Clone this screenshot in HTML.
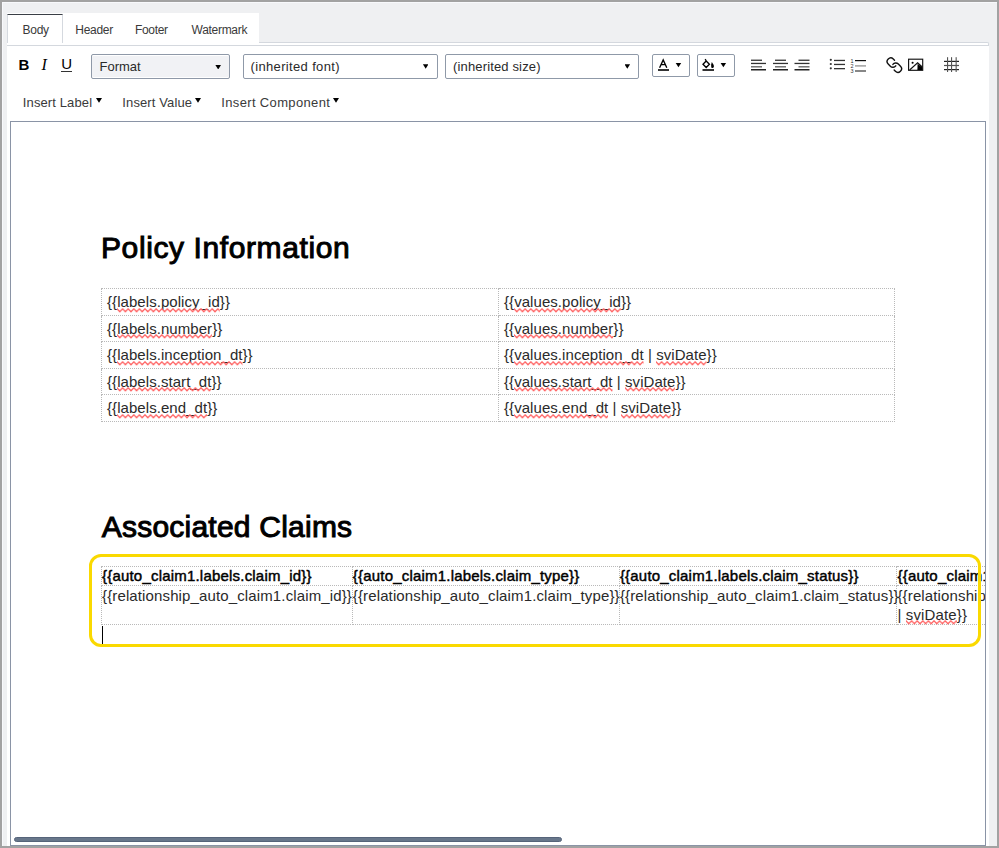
<!DOCTYPE html>
<html><head><meta charset="utf-8">
<style>
*{box-sizing:border-box;margin:0;padding:0}
html,body{width:999px;height:848px;overflow:hidden;background:#a2a2a2}
body{font-family:"Liberation Sans",sans-serif;color:#222;position:relative}
.abs{position:absolute}
#frame{left:2px;top:2px;width:995px;height:844px;background:#eff0f2;border-left:1px solid #f8f9fc;border-top:1px solid #f8f9fc}
#panel{left:7px;top:45px;width:982px;height:801px;background:#fff}
#tabs{left:7px;top:13px;width:252px;height:32px;background:#fff}
.tabline{background:#d4d8de;height:1px}
.tab{top:13px;height:32px;font-size:12px;letter-spacing:-0.3px;line-height:14px;color:#3a3a3a;white-space:nowrap}
.sel{top:54px;height:25px;border:1.5px solid #8f99a8;border-radius:2px;background:#fff;box-shadow:inset 0 1px #fff,inset 0 -1px #fff;font-size:13px;line-height:20px;color:#2a2a2a;white-space:nowrap}
.arrow{width:5.6px;height:4.5px;background:#000;clip-path:polygon(0 0,100% 0,50% 100%)}
.marrow{position:absolute;top:97.9px;width:6px;height:4.9px;background:#000;clip-path:polygon(0 0,100% 0,50% 100%)}
.menu{top:95px;font-size:13px;line-height:16px;color:#3a3a3a;white-space:nowrap;letter-spacing:0.12px}
#editor{left:10px;top:121px;width:976px;height:725px;border:1px solid #8a94a6;background:#fff;overflow:hidden}
.h{font-weight:normal;font-size:30px;line-height:36px;color:#000;-webkit-text-stroke:1px #000;letter-spacing:0;white-space:nowrap}
table{border-collapse:collapse}
td{border:1px dotted #b9b9b9;vertical-align:top;white-space:nowrap}
.sp{position:relative}
.sp svg{position:absolute;left:0;top:calc(100% - 2.3px);width:100%;height:5px}
#t1{left:90px;top:166px;width:794px;font-size:15px;letter-spacing:0.06px;color:#2a2a2a}
#t1 td{height:26.6px;padding:4px 0 0 5px;line-height:18px}
#t2{left:90px;top:443.5px;font-size:15px;letter-spacing:0.13px;color:#2a2a2a;table-layout:fixed;width:1095.5px}
#t2 td{padding:1.1px 0 0 0;line-height:18.6px}
#t2 tr.hd td{line-height:18.5px;padding:0}
#t2 tr.hd td{font-weight:normal;color:#000;-webkit-text-stroke:0.45px #000;letter-spacing:0.2px}
</style></head><body>
<svg width="0" height="0" style="position:absolute"><defs><pattern id="zz" patternUnits="userSpaceOnUse" width="5.6" height="5"><path d="M-2.8 3.8 L0 0.8 L2.8 3.8 L5.6 0.8 L8.4 3.8" stroke="#ff6464" stroke-width="1.25" fill="none"/></pattern></defs></svg>
<div id="frame" class="abs"></div>
<div id="tabs" class="abs"></div>
<div class="abs" style="left:259px;top:42px;width:730px;height:4px;background:#fff;border-top:1px solid #d4d8de;border-right:1px solid #d4d8de;border-top-right-radius:2px"></div>
<div id="panel" class="abs"></div>
<div class="abs tabline" style="left:7px;top:45px;width:982px"></div>
<!-- body tab -->
<div class="abs" style="left:7px;top:14px;width:56px;height:29px;border-left:1px solid #d5d9df;border-right:1px solid #d5d9df;border-top:1.5px solid #3a3f46;background:#fff"></div>
<div class="abs tab" style="left:22.6px;top:23px">Body</div>
<div class="abs tab" style="left:75.3px;top:23px">Header</div>
<div class="abs tab" style="left:134.9px;top:23px">Footer</div>
<div class="abs tab" style="left:191.6px;top:23px">Watermark</div>

<!-- toolbar row 1 -->
<div class="abs" style="left:18.5px;top:54.5px;font:bold 15px 'Liberation Sans',sans-serif;color:#000;line-height:20px">B</div>
<div class="abs" style="left:41.5px;top:54.5px;font:italic 16px 'Liberation Serif',serif;color:#000;line-height:20px">I</div>
<div class="abs" style="left:61.3px;top:54.4px;font:15px 'Liberation Sans',sans-serif;color:#000;line-height:20px">U</div>
<div class="abs" style="left:61px;top:71.2px;width:10.8px;height:1.1px;background:#333"></div>

<div class="abs sel" style="left:90.5px;width:139.5px;background:#f1f2f5"><span class="abs" style="left:8px;top:1.5px">Format</span><div class="abs arrow" style="left:123.9px;top:9.9px"></div></div>
<div class="abs sel" style="left:243px;width:194.5px"><span class="abs" style="left:6.5px;top:1.5px;letter-spacing:0.35px">(inherited font)</span><div class="abs arrow" style="left:178.9px;top:9.3px"></div></div>
<div class="abs sel" style="left:445px;width:194px"><span class="abs" style="left:7px;top:1.5px;letter-spacing:0.15px">(inherited size)</span><div class="abs arrow" style="left:178.5px;top:9.3px"></div></div>

<div class="abs sel" style="left:652px;width:38px;height:23px"></div>
<div class="abs sel" style="left:697px;width:38px;height:23px"></div>
<svg class="abs" style="left:0;top:0" width="999" height="90" viewBox="0 0 999 90">
  <!-- A color -->
  <path d="M659.6 67.8 L663.2 59.9 L666.8 67.8 M661.2 64.6 H665.2" stroke="#000" stroke-width="1.35" fill="none"/>
  <rect x="658" y="69" width="11" height="2" fill="#333"/>
  <path d="M675.7 63 H681.2 L678.45 67.2 Z" fill="#000"/>
  <!-- bucket -->
  <path d="M706.2 61 L709.4 64.2 L706.2 67.5 L703 64.2 Z M706.2 61 L705.2 59.2" stroke="#000" stroke-width="1.35" fill="none"/>
  <path d="M711.8 62 Q714.2 65 713.9 67 Q712.8 68.8 711.3 67.4 Q710.6 65.5 711.8 62 Z" fill="#000"/>
  <rect x="702.5" y="69" width="11.5" height="2" fill="#333"/>
  <path d="M720.6 63 H726.1 L723.35 67.2 Z" fill="#000"/>
  <!-- align left -->
  <g fill="#333">
   <rect x="751" y="59.6" width="11" height="1.3"/><rect x="751" y="62.8" width="15" height="1.3"/><rect x="751" y="66.1" width="11" height="1.4" fill="#666"/><rect x="751" y="69" width="15" height="1.5" fill="#222"/>
   <rect x="775" y="59.6" width="11" height="1.3"/><rect x="773" y="62.8" width="15" height="1.3"/><rect x="775" y="66.1" width="11" height="1.4" fill="#666"/><rect x="773" y="69" width="15" height="1.5" fill="#222"/>
   <rect x="798.5" y="59.6" width="11" height="1.3"/><rect x="794.5" y="62.8" width="15" height="1.3"/><rect x="798.5" y="66.1" width="11" height="1.4" fill="#666"/><rect x="794.5" y="69" width="15" height="1.5" fill="#222"/>
  </g>
  <!-- bullets -->
  <g fill="#333">
   <circle cx="830.8" cy="59.8" r="1.1"/><circle cx="830.8" cy="64" r="1.1"/><circle cx="830.8" cy="68.3" r="1.1"/>
   <rect x="834" y="59.8" width="11" height="1.3"/><rect x="834" y="63.8" width="11" height="1.3"/><rect x="834" y="68" width="11" height="1.3"/>
   <rect x="855" y="60" width="11" height="1.2" fill="#111"/><rect x="855" y="65.2" width="11" height="1.4" fill="#999"/><rect x="855" y="70.3" width="11" height="1.4" fill="#555"/>
  </g>
  <text x="850.5" y="62.5" font-family="Liberation Sans" font-size="5.5" fill="#333">1</text>
  <text x="850.5" y="67.5" font-family="Liberation Sans" font-size="5.5" fill="#333">2</text>
  <text x="850.5" y="72.5" font-family="Liberation Sans" font-size="5.5" fill="#333">3</text>
  <!-- link -->
  <g transform="translate(885.7,56.5) scale(0.72)" stroke="#111" stroke-width="1.95" fill="none" stroke-linecap="round" stroke-linejoin="round">
   <path d="M14 13 a5 5 0 0 1 -7.54 .54 l-3 -3 a5 5 0 0 1 7.07 -7.07 l1.72 1.71"/>
   <path d="M10 11 a5 5 0 0 1 7.54 -.54 l3 3 a5 5 0 0 1 -7.07 7.07 l-1.71 -1.71"/>
  </g>
  <!-- image -->
  <rect x="908.6" y="59.2" width="14.1" height="11.1" stroke="#111" stroke-width="1.15" fill="none"/>
  <circle cx="912.6" cy="62.8" r="1.05" fill="#000"/>
  <path d="M909.6 70 L917.6 62.8 L922.3 67" fill="none" stroke="#111" stroke-width="1.1"/>
  <path d="M917.6 63.8 L922.4 67.4 L922.4 70 L917.4 70 Z" fill="#000"/>
  <!-- table -->
  <g fill="#222">
   <rect x="944" y="60.8" width="15" height="1.2"/><rect x="944" y="64.9" width="15" height="1.2" fill="#555"/><rect x="944" y="69" width="15" height="1.2"/>
   <rect x="947" y="57.2" width="1.1" height="14.8" fill="#555"/><rect x="951" y="57.2" width="1.1" height="14.8" fill="#555"/><rect x="955.6" y="57.2" width="1.1" height="14.8" fill="#555"/>
  </g>
</svg>

<!-- toolbar row 2 -->
<div class="abs menu" style="left:22.8px">Insert Label</div>
<div class="marrow" style="left:96px"></div>
<div class="abs menu" style="left:122.3px">Insert Value</div>
<div class="marrow" style="left:195px"></div>
<div class="abs menu" style="left:221.3px;letter-spacing:0.35px">Insert Component</div>
<div class="marrow" style="left:333px"></div>

<div id="editor" class="abs">
  <div class="abs h" style="left:90px;top:108.4px;letter-spacing:0.6px">Policy Information</div>
  <table id="t1" class="abs">
    <tr><td style="width:397px">{{<span class="sp">labels.policy_id<svg><rect width="100%" height="5" fill="url(#zz)"/></svg></span>}}</td><td>{{<span class="sp">values.policy_id<svg><rect width="100%" height="5" fill="url(#zz)"/></svg></span>}}</td></tr>
    <tr><td>{{<span class="sp">labels.number<svg><rect width="100%" height="5" fill="url(#zz)"/></svg></span>}}</td><td>{{<span class="sp">values.number<svg><rect width="100%" height="5" fill="url(#zz)"/></svg></span>}}</td></tr>
    <tr><td>{{<span class="sp">labels.inception_dt<svg><rect width="100%" height="5" fill="url(#zz)"/></svg></span>}}</td><td>{{<span class="sp">values.inception_dt<svg><rect width="100%" height="5" fill="url(#zz)"/></svg></span> | <span class="sp">sviDate<svg><rect width="100%" height="5" fill="url(#zz)"/></svg></span>}}</td></tr>
    <tr><td>{{<span class="sp">labels.start_dt<svg><rect width="100%" height="5" fill="url(#zz)"/></svg></span>}}</td><td>{{<span class="sp">values.start_dt<svg><rect width="100%" height="5" fill="url(#zz)"/></svg></span> | <span class="sp">sviDate<svg><rect width="100%" height="5" fill="url(#zz)"/></svg></span>}}</td></tr>
    <tr><td>{{<span class="sp">labels.end_dt<svg><rect width="100%" height="5" fill="url(#zz)"/></svg></span>}}</td><td>{{<span class="sp">values.end_dt<svg><rect width="100%" height="5" fill="url(#zz)"/></svg></span> | <span class="sp">sviDate<svg><rect width="100%" height="5" fill="url(#zz)"/></svg></span>}}</td></tr>
  </table>
  <div class="abs h" style="left:90.7px;top:387px;letter-spacing:0.23px">Associated Claims</div>
  <table id="t2" class="abs">
    <colgroup><col style="width:250.8px"><col style="width:267.1px"><col style="width:277.6px"><col style="width:300px"></colgroup><tr class="hd"><td style="height:18.5px">{{auto_claim1.labels.claim_id}}</td><td>{{auto_claim1.labels.claim_type}}</td><td>{{auto_claim1.labels.claim_status}}</td><td>{{auto_claim1.labels.loss_dt}}</td></tr>
    <tr><td style="height:38.5px">{{relationship_auto_claim1.claim_id}}</td><td>{{relationship_auto_claim1.claim_type}}</td><td>{{relationship_auto_claim1.claim_status}}</td><td>{{relationship_auto_claim1.loss_dt<br>| <span class="sp">sviDate<svg><rect width="100%" height="5" fill="url(#zz)"/></svg></span>}}</td></tr>
  </table>
  <div class="abs" style="left:90.5px;top:503.5px;width:1px;height:18.5px;background:#000"></div>
  <div class="abs" style="left:3px;top:714.8px;width:548px;height:5px;border-radius:2.5px;background:#68778b;border:1px solid #56647a"></div>
</div>
<div class="abs" style="left:89px;top:554px;width:892px;height:93px;border:3px solid #fad900;border-radius:12px"></div>
</body></html>
